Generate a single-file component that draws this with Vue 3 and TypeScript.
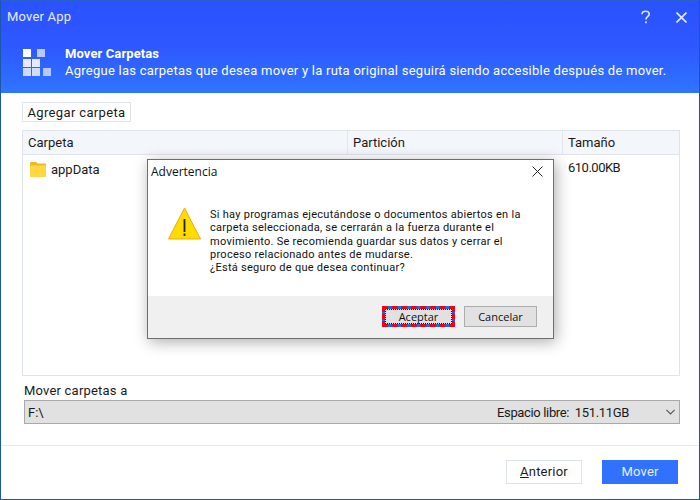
<script setup lang="ts">
const columns: string[] = ['Carpeta', 'Partición', 'Tamaño']
const message: string[] = [
  'Si hay programas ejecutándose o documentos abiertos en la',
  'carpeta seleccionada, se cerrarán a la fuerza durante el',
  'movimiento. Se recomienda guardar sus datos y cerrar el',
  'proceso relacionado antes de mudarse.',
  '¿Está seguro de que desea continuar?'
]
</script>

<template>
  <div class="window">
    <header class="banner">
      <div class="titlebar">
        <span class="app-title">Mover App</span>
        <div class="controls">
          <svg width="12" height="14" viewBox="0 0 12 14" fill="none" stroke="#e6ecff" stroke-width="1.6">
            <path d="M2 4.2C2 2.2 3.8 1.2 5.6 1.2C7.6 1.2 9.2 2.4 9.2 4.2C9.2 6.4 6 6.6 6 9.4" />
            <path d="M6 11.2V13.2" />
          </svg>
          <svg width="11" height="11" viewBox="0 0 11 11" fill="none" stroke="#e6ecff" stroke-width="1.6">
            <path d="M.5.5L10.5 10.5M10.5.5L.5 10.5" />
          </svg>
        </div>
      </div>
      <div class="intro">
        <svg class="logo" width="30" height="30" viewBox="0 0 30 30">
          <rect x="0" y="0" width="8" height="8" fill="#fff" />
          <rect x="14" y="0" width="8" height="8" fill="#b4c9ff" />
          <rect x="0" y="10" width="8" height="8" fill="#e4ebff" />
          <rect x="9" y="10" width="8" height="8" fill="#e4ebff" />
          <rect x="0" y="19" width="8" height="8" fill="#cfdcff" />
          <rect x="9" y="19" width="8" height="8" fill="#cfdcff" />
          <rect x="20" y="19" width="8" height="8" fill="#b4c9ff" />
        </svg>
        <div class="intro-text">
          <strong>Mover Carpetas</strong>
          <span>Agregue las carpetas que desea mover y la ruta original seguirá siendo accesible después de mover.</span>
        </div>
      </div>
    </header>

    <main class="content">
      <button class="add-btn">Agregar carpeta</button>
      <section class="table">
        <div class="thead">
          <div v-for="c in columns" :key="c" class="th">{{ c }}</div>
        </div>
        <div class="tr">
          <div class="td name">
            <svg width="16" height="15" viewBox="0 0 16 15">
              <path d="M0 1.5C0 .7.5 0 1.3 0H6L7.6 1.6H15C15.6 1.6 16 2 16 2.6V4H0Z" fill="#f2b824" />
              <path d="M0 3.6H16V14C16 14.6 15.6 15 15 15H1C.4 15 0 14.6 0 14Z" fill="#ffd740" />
            </svg>
            <span>appData</span>
          </div>
          <div class="td"></div>
          <div class="td size">610.00KB</div>
        </div>
      </section>

      <div class="dest">
        <div class="dest-label">Mover carpetas a</div>
        <div class="select">
          <span class="drive">F:\</span>
          <span class="free">Espacio libre:&nbsp; 151.11GB</span>
          <svg width="9" height="6" viewBox="0 0 9 6" fill="none" stroke="#555" stroke-width="1.1">
            <path d="M.4.8L4.5 4.9L8.6.8" />
          </svg>
        </div>
      </div>
    </main>

    <footer class="footer">
      <button class="btn-outline"><u>A</u>nterior</button>
      <button class="btn-primary">Mover</button>
    </footer>

    <div class="dialog" role="dialog">
      <div class="dialog-title">
        <span>Advertencia</span>
        <svg width="11" height="11" viewBox="0 0 11 11" fill="none" stroke="#222" stroke-width="1">
          <path d="M.5.5L10.5 10.5M10.5.5L.5 10.5" />
        </svg>
      </div>
      <div class="dialog-body">
        <svg class="warn" width="33" height="33" viewBox="0 0 33 33">
          <path d="M16.5 1L32.5 32H.5Z" fill="#ffdc00" stroke="#f0a818" stroke-width="1" />
          <rect x="15.6" y="12" width="1.8" height="13" fill="#222" />
          <rect x="15.6" y="26.5" width="1.8" height="2.4" fill="#222" />
        </svg>
        <p class="msg">
          <span v-for="line in message" :key="line">{{ line }}</span>
        </p>
      </div>
      <div class="dialog-foot">
        <button class="dlg-btn focused"><span>Aceptar</span></button>
        <button class="dlg-btn">Cancelar</button>
      </div>
    </div>
  </div>
</template>

<style>
html, body { margin: 0; padding: 0; }
</style>

<style scoped>
.window {
  position: relative;
  width: 700px;
  height: 500px;
  box-sizing: border-box;
  border: 1px solid #1b58a8;
  border-top-color: #2a5fd0;
  display: flex;
  flex-direction: column;
  background: #fff;
  font-family: Roboto, "Liberation Sans", sans-serif;
  font-size: 13px;
  color: #1a1a1a;
  overflow: hidden;
}
.banner {
  height: 92px;
  flex: none;
  background: linear-gradient(180deg, #2a52ff 0%, #2e58ff 50%, #2e75ff 100%);
  color: #fff;
  display: flex;
  flex-direction: column;
}
.titlebar {
  height: 32px;
  display: flex;
  align-items: center;
  justify-content: space-between;
  padding: 0 12px 0 6px;
}
.app-title { font-size: 13px; letter-spacing: .2px; color: #e8eeff; margin-top: -2px; }
.controls { display: flex; align-items: center; gap: 24px; }
.intro {
  display: flex;
  align-items: center;
  padding: 13px 0 0 22px;
  gap: 12px;
}
.logo { margin-top: 3px; }
.intro-text { display: flex; flex-direction: column; gap: 1px; font-size: 13px; line-height: 16px; letter-spacing: .25px; white-space: nowrap; }
.intro-text strong { font-weight: 700; letter-spacing: .1px; }
.content {
  flex: none;
  height: 353px;
  box-sizing: border-box;
  display: flex;
  flex-direction: column;
  padding: 9px 19px 0 21px;
  border-bottom: 1px solid #e6e8f0;
}
.add-btn {
  align-self: flex-start;
  width: 109px;
  height: 20px;
  padding: 0;
  border: 1px solid #dfe3ec;
  background: #fff;
  font: inherit;
  letter-spacing: .35px;
  color: #1a1a1a;
}
.table {
  margin-top: 8px;
  height: 246px;
  box-sizing: border-box;
  border: 1px solid #dfe3ec;
  display: flex;
  flex-direction: column;
}
.thead {
  display: grid;
  grid-template-columns: 324px 215px 1fr;
  height: 24px;
  box-sizing: border-box;
  background: #f3f6fb;
  border-bottom: 1px solid #dfe3ec;
  flex: none;
}
.th {
  display: flex;
  align-items: center;
  padding-left: 5px;
}
.th + .th { box-shadow: inset 1px 0 0 #e3e6ee; padding-left: 6px; }
.tr { display: grid; grid-template-columns: 324px 215px 1fr; }
.td { height: 24px; display: flex; align-items: center; }
.name { padding: 2px 0 0 7px; gap: 5px; }
.size { padding: 0 0 4px 6px; letter-spacing: -.5px; }
.dest { margin-top: 7px; padding-left: 2px; }
.dest-label { height: 17px; line-height: 15px; letter-spacing: .2px; }
.select {
  height: 24px;
  box-sizing: border-box;
  border: 1px solid #a9a9a9;
  background: #e1e1e1;
  display: flex;
  align-items: center;
  padding: 0 4px 0 3px;
}
.drive { flex: 1; }
.free { margin-right: 37px; letter-spacing: -.35px; }
.footer {
  height: 53px;
  flex: none;
  display: flex;
  align-items: center;
  justify-content: flex-end;
  gap: 20px;
  padding: 0 21px 2px 0;
  box-sizing: border-box;
}
.btn-outline, .btn-primary {
  width: 76px;
  height: 24px;
  padding: 0;
  font: inherit;
  letter-spacing: .2px;
}
.btn-outline { border: 1px solid #dfe3ec; background: #fff; color: #1a1a1a; }
.btn-primary { border: 0; background: #3072ff; color: #e8eeff; }

.dialog {
  position: absolute;
  left: 146px;
  top: 158px;
  width: 407px;
  height: 180px;
  box-sizing: border-box;
  border: 1px solid #6e6e6e;
  background: #fff;
  box-shadow: 2px 3px 14px rgba(0, 0, 0, .32);
  display: flex;
  flex-direction: column;
  font-family: "Open Sans", "Noto Sans", sans-serif;
  font-size: 11px;
  color: #111;
}
.dialog-title {
  height: 23px;
  flex: none;
  display: flex;
  align-items: center;
  justify-content: space-between;
  padding: 0 10px 0 3px;
  font-size: 12px;
}
.dialog-body {
  flex: 1;
  display: flex;
  align-items: flex-start;
  padding: 24px 0 0 20px;
  gap: 9px;
}
.msg {
  margin: 1px 0 0;
  display: flex;
  flex-direction: column;
  gap: .3px;
  line-height: 13px;
  font-family: Roboto, "Liberation Sans", sans-serif;
  font-size: 11px;
  letter-spacing: .27px;
  white-space: nowrap;
}
.dialog-foot {
  height: 42px;
  flex: none;
  background: #f0f0f0;
  display: flex;
  align-items: flex-start;
  justify-content: flex-end;
  gap: 9px;
  padding: 10px 16px 0 0;
  box-sizing: border-box;
}
.dlg-btn {
  width: 73px;
  height: 21px;
  box-sizing: border-box;
  padding: 0;
  border: 1px solid #adadad;
  background: #e1e1e1;
  font: inherit;
  color: #111;
}
.focused {
  position: relative;
  z-index: 0;
  border: 3px dashed #f0001c;
  background: #0a78d7;
}
.focused::before {
  content: "";
  position: absolute;
  inset: 0;
  z-index: -1;
  background: #e1e1e1;
  border: 1px dotted #111;
}
</style>
